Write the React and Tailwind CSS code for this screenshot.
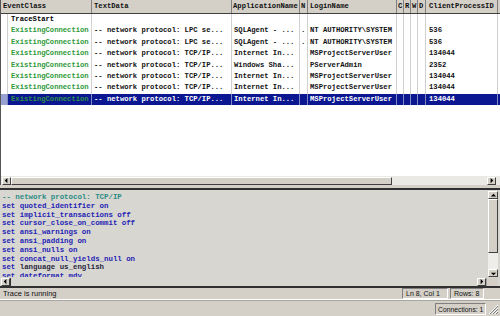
import React from "react";

const cols = [
  { w: 7 },
  { w: 84, key: "ev" },
  { w: 140, key: "td" },
  { w: 68, key: "app" },
  { w: 8, key: "n" },
  { w: 89, key: "login" },
  { w: 7 },
  { w: 7 },
  { w: 7 },
  { w: 8 },
  { w: 72, key: "cp" },
];

const rows = [
  { ev: "TraceStart", evColor: "text-black" },
  { ev: "ExistingConnection", td: "-- network protocol: LPC se...", app: "SQLAgent - ...", n: ".", login: "NT AUTHORITY\\SYSTEM", cp: "536" },
  { ev: "ExistingConnection", td: "-- network protocol: LPC se...", app: "SQLAgent - ...", n: ".", login: "NT AUTHORITY\\SYSTEM", cp: "536" },
  { ev: "ExistingConnection", td: "-- network protocol: TCP/IP...", app: "Internet In...", login: "MSProjectServerUser", cp: "134044" },
  { ev: "ExistingConnection", td: "-- network protocol: TCP/IP...", app: "Windows Sha...", login: "PServerAdmin", cp: "2352" },
  { ev: "ExistingConnection", td: "-- network protocol: TCP/IP...", app: "Internet In...", login: "MSProjectServerUser", cp: "134044" },
  { ev: "ExistingConnection", td: "-- network protocol: TCP/IP...", app: "Internet In...", login: "MSProjectServerUser", cp: "134044" },
  { ev: "ExistingConnection", td: "-- network protocol: TCP/IP...", app: "Internet In...", login: "MSProjectServerUser", cp: "134044", sel: true },
];

const mono = { fontFamily: '"Liberation Mono", "DejaVu Sans Mono", monospace' };
const sans = { fontFamily: '"Liberation Sans", Arial, sans-serif' };

function Header() {
  const heads = [
    { w: 91, t: "EventClass", pl: "pl-[2px]" },
    { w: 140, t: "TextData", pl: "pl-[2px]" },
    { w: 68, t: "ApplicationName", pl: "pl-[1px]" },
    { w: 8, t: "N", pl: "pl-[1px]" },
    { w: 89, t: "LoginName", pl: "pl-[2px]" },
    { w: 7, t: "C", pl: "pl-[1px]" },
    { w: 7, t: "R", pl: "pl-[1px]" },
    { w: 7, t: "W", pl: "pl-[1px]" },
    { w: 8, t: "D", pl: "pl-[1px]" },
    { w: 72, t: "ClientProcessID", pl: "pl-[3px]" },
  ];
  return (
    <div className="flex h-[14px] bg-[#d4d0c8] border-b border-[#404040] shrink-0">
      {heads.map((h, i) => (
        <div
          key={i}
          style={{ width: h.w }}
          className={`h-full shrink-0 overflow-hidden whitespace-nowrap border-r border-[#808080] text-[7.2px] font-bold leading-[13px] text-[#111] ${h.pl}`}
        >
          {h.t}
        </div>
      ))}
      <div className="flex-1" />
    </div>
  );
}

function Row({ r }) {
  const sel = r.sel;
  return (
    <div className="flex h-[11.4px] shrink-0">
      {cols.map((c, i) => {
        let content = c.key ? r[c.key] || "" : "";
        let color = sel ? "text-white" : "text-[#111]";
        if (c.key === "ev") color = r.evColor ? r.evColor : "text-[#2f9a3a]";
        if (c.key === "ev" && sel) color = "text-[#2f8f4a]";
        let bg = "";
        if (sel) bg = i === 0 ? "bg-[#98a2d2]" : "bg-[#0b1790]";
        const pl = c.key === "ev" ? "pl-[3px]" : c.key === "cp" ? "pl-[3px]" : c.key === "n" ? "pl-[1px]" : "pl-[2px]";
        return (
          <div
            key={i}
            style={{ width: c.w }}
            className={`h-full shrink-0 overflow-hidden whitespace-nowrap border-r ${sel ? "border-[#8088c0]" : "border-[#d0d0d0]"} text-[7.2px] font-bold leading-[11.4px] ${color} ${bg} ${pl}`}
          >
            {content}
          </div>
        );
      })}
      <div className={`flex-1 ${sel ? "bg-[#0b1790]" : ""}`} />
    </div>
  );
}

function ArrowBox({ dir, className = "" }) {
  const paths = {
    left: "M5 1 L2 4 L5 7 Z",
    right: "M3 1 L6 4 L3 7 Z",
    up: "M1 5 L4 2 L7 5 Z",
    down: "M1 3 L4 6 L7 3 Z",
  };
  return (
    <div className={`w-[9px] h-[8px] shrink-0 bg-[#d4d0c8] border-t border-l border-white border-r border-b border-r-[#404040] border-b-[#404040] flex items-center justify-center ${className}`}>
      <svg width="7" height="7" viewBox="0 0 8 8">
        <path d={paths[dir]} fill="#000" />
      </svg>
    </div>
  );
}

export default function App() {
  const lines = [
    [["-- network protocol: TCP/IP", "text-[#2a8c84]"]],
    [["set quoted_identifier on", "text-[#2424b4]"]],
    [["set implicit_transactions off", "text-[#2424b4]"]],
    [["set cursor_close_on_commit off", "text-[#2424b4]"]],
    [["set ansi_warnings on", "text-[#2424b4]"]],
    [["set ansi_padding on", "text-[#2424b4]"]],
    [["set ansi_nulls on", "text-[#2424b4]"]],
    [["set concat_null_yields_null on", "text-[#2424b4]"]],
    [["set ", "text-[#2424b4]"], ["language us_english", "text-[#262640]"]],
    [["set dateformat mdy", "text-[#2424b4]"]],
  ];
  return (
    <div className="w-[500px] h-[316px] flex flex-col bg-[#d4d0c8] overflow-hidden" style={mono}>
      {/* Grid pane */}
      <div className="h-[185px] flex flex-col bg-white border-l border-[#555] shrink-0">
        <Header />
        {rows.map((r, i) => (
          <Row key={i} r={r} />
        ))}
        <div className="flex-1" />
        <div className="h-[9px] flex items-center bg-[#ebe9e4] shrink-0 pl-[1px] pr-[4px]">
          <ArrowBox dir="left" />
          <div className="w-[381px] h-[8px] bg-[#d4d0c8] border-t border-l border-white border-r border-b border-r-[#404040] border-b-[#404040]" />
          <div className="flex-1" />
          <ArrowBox dir="right" />
        </div>
      </div>
      {/* splitter */}
      <div className="h-[3px] bg-[#d4d0c8] shrink-0" />
      <div className="h-[2px] bg-[#303030] shrink-0" />
      {/* text pane */}
      <div className="h-[96px] flex flex-col bg-[#d8d6d1] shrink-0">
        <div className="flex flex-1 overflow-hidden">
          <div className="flex-1 overflow-hidden pt-[3px] pl-[2px]">
            {lines.map((ln, i) => (
              <div key={i} className="h-[8.8px] text-[7.4px] font-bold leading-[8.8px] whitespace-nowrap">
                {ln.map(([t, c], j) => (
                  <span key={j} className={c}>
                    {t}
                  </span>
                ))}
              </div>
            ))}
          </div>
          <div className="w-[12px] flex flex-col items-center pr-[2px] pt-[1px]">
            <ArrowBox dir="up" className="w-[10px]" />
            <div className="w-[10px] h-[54px] bg-[#d4d0c8] border-t border-l border-white border-r border-b border-r-[#404040] border-b-[#404040]" />
            <div className="w-[10px] flex-1 bg-[#eeede9]" />
            <ArrowBox dir="down" className="w-[10px]" />
          </div>
        </div>
        <div className="h-[9px] flex items-center shrink-0 pl-[1px] pr-[2px]">
          <ArrowBox dir="left" />
          <div className="w-px h-[8px] bg-[#303030]" />
          <div className="flex-1 h-[8px] bg-[#d8d6d1]" />
          <ArrowBox dir="right" />
          <div className="w-[12px] h-[8px] border-l border-[#a0a0a0] bg-[#d4d0c8]" />
        </div>
      </div>
      <div className="h-[2px] bg-[#303030] shrink-0" />
      {/* status bar 1 */}
      <div className="h-[12px] flex items-center shrink-0 bg-[#d4d0c8] border-b border-white" style={sans}>
        <div className="flex-1 pl-[3px] text-[7.5px] leading-[11px] text-[#111]">Trace is running</div>
        <div className="w-[46px] h-[11px] whitespace-nowrap border-t border-l border-[#808080] border-r border-b border-r-white border-b-white text-[7px] leading-[10px] pl-[3px] text-[#111] mr-[2px]">
          Ln 8, Col 1
        </div>
        <div className="w-[34px] h-[11px] whitespace-nowrap border-t border-l border-[#808080] border-r border-b border-r-white border-b-white text-[7px] leading-[10px] pl-[3px] text-[#111] mr-[16px]">
          Rows: 8
        </div>
      </div>
      {/* status bar 2 */}
      <div className="flex-1 flex items-center bg-[#d4d0c8] border-t border-[#a8a6a0]" style={sans}>
        <div className="flex-1" />
        <div className="w-[51px] h-[12px] whitespace-nowrap border-t border-l border-[#808080] border-r border-b border-r-white border-b-white text-[6.8px] leading-[11px] pl-[2px] text-[#111]">
          Connections: 1
        </div>
        <div className="w-[14px] h-full flex items-end justify-end pr-[1px] pb-[1px]">
          <svg width="11" height="11" viewBox="0 0 11 11">
            <path d="M10 1 L1 10 M10 4 L4 10 M10 7 L7 10" stroke="#fff" strokeWidth="1" />
            <path d="M10 2 L2 10 M10 5 L5 10 M10 8 L8 10" stroke="#808080" strokeWidth="1" />
          </svg>
        </div>
      </div>
    </div>
  );
}
